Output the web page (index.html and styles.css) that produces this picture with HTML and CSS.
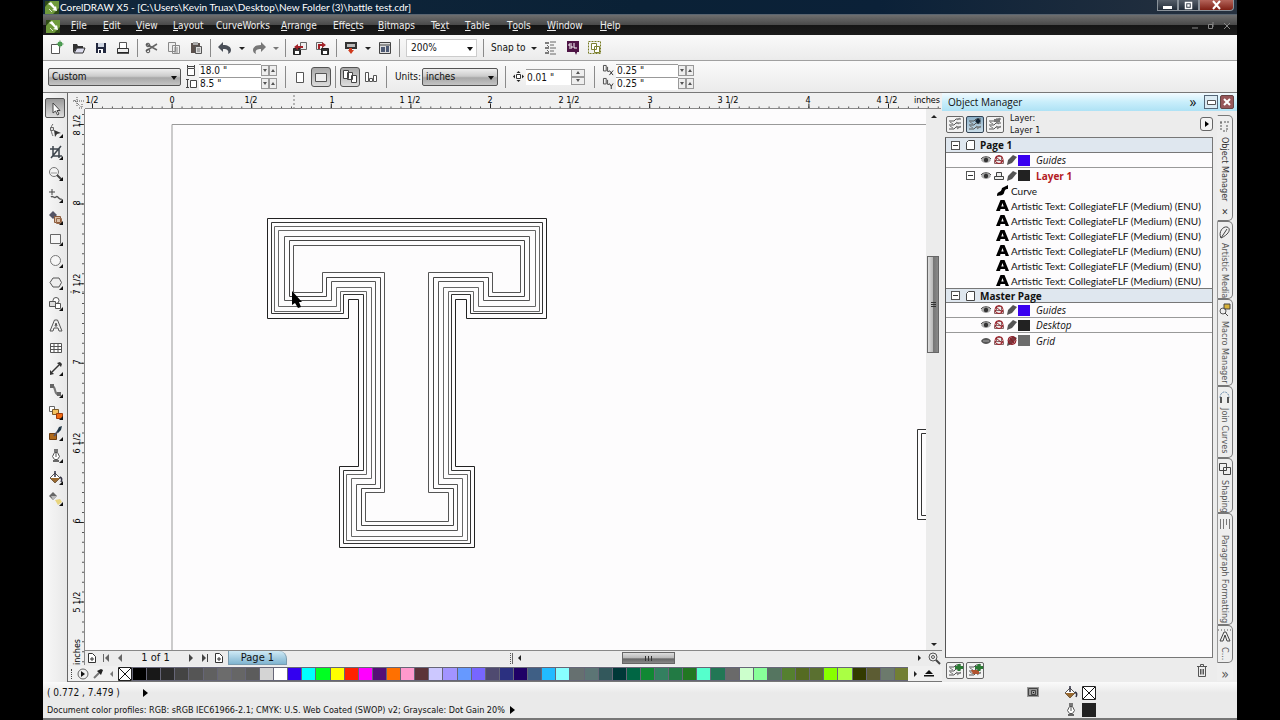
FILE: index.html
```html
<!DOCTYPE html>
<html lang="en">
<head>
<meta charset="utf-8">
<title>CorelDRAW X5</title>
<link rel="stylesheet" href="styles.css">
</head>
<body>
<svg class="defs" aria-hidden="true">
  <defs>
    <g id="i-logo"><rect width="14" height="13" fill="#6f9a3c"/><path d="M0 0h5L0 6zM14 13H8l6-6z" fill="#2f4a16"/><path d="M3 3l3-2 4 5 1-1 1 5-5-1 2-1-4-4z" fill="#fff"/><path d="M4 8l3 3" stroke="#dfe8d0"/></g>
    <g id="i-new"><path d="M2.500 4.500h8v9h-8z" fill="#fff" stroke="#555"/><circle cx="11" cy="4" r="2.500" fill="#3c9a46"/><path d="M11 0v8M7 4h8" stroke="#6a9a66" stroke-width=".6"/></g>
    <g id="i-open"><path d="M2 13V4h4l1 2h5v2H6z" fill="#333"/><path d="M3 13l3-5h8l-2 5z" fill="#dde" stroke="#333"/></g>
    <g id="i-save"><path d="M3 3h10v10H3z" fill="#23293f"/><path d="M5 3h6v4H5z" fill="#cfd6e2"/><path d="M5 9h5v4H5z" fill="#fff"/><path d="M6 10h2v3H6z" fill="#23293f"/></g>
    <g id="i-print"><path d="M4.500 8V2.500h7V8" fill="#fff" stroke="#555"/><path d="M2.500 8.500h11v4h-11z" fill="#eee" stroke="#333"/><path d="M2 13h12" stroke="#222" stroke-width="1.500"/></g>
    <g id="i-cut"><path d="M2 4l11 6M2 11l11-7" stroke="#666" stroke-width="1.500"/><circle cx="4" cy="5" r="1.800" fill="none" stroke="#555"/><circle cx="4" cy="11" r="1.800" fill="none" stroke="#555"/></g>
    <g id="i-copy"><path d="M2.500 2.500h7v9h-7zM6.500 5.500h7v8h-7z" fill="#eee" stroke="#888"/><path d="M8 8h4M8 10h4M8 12h4" stroke="#888"/></g>
    <g id="i-paste"><path d="M3 3h9v10H3z" fill="#5a504c"/><path d="M5 2h5v3H5z" fill="#aaa"/><path d="M7.500 6.500h6v7h-6z" fill="#ddd" stroke="#555"/><path d="M9 9h3M9 11h3" stroke="#777"/></g>
    <g id="i-undo"><path d="M1 7l5-5v3c5 0 8 2 8 5 0 2-1 3-3 4 1-3 0-5-5-5v3z" fill="#4a4f58"/></g>
    <g id="i-redo"><path d="M15 7l-5-5v3C5 5 2 7 2 10c0 2 1 3 3 4-1-3 0-5 5-5v3z" fill="#777"/></g>
    <g id="i-import"><path d="M1.500 8.500h7v6h-7z" fill="#333" stroke="#222"/><path d="M3 11h4v3H3z" fill="#fff"/><path d="M8.500 2.500h6v7h-6z" fill="#eee" stroke="#666"/><path d="M11 3v3H6V4L2 7l4 3V8h5z" fill="#a32228"/></g>
    <g id="i-export"><path d="M2.500 2.500h6v7h-6z" fill="#eee" stroke="#666"/><path d="M7.500 8.500h7v6h-7z" fill="#333" stroke="#222"/><path d="M9 11h4v3H9z" fill="#fff"/><path d="M4 9V4h4V2l4 3-4 3V6H6v3z" fill="#a32228"/></g>
    <g id="i-launch"><path d="M2 2h12v7H2z" fill="#333"/><path d="M4 4h8v3H4z" fill="#bbb"/><path d="M6 8h3v2h2l-3 4-3-4h1z" fill="#d03a1c"/></g>
    <g id="i-welcome"><path d="M2.500 2.500h11v11h-11z" fill="#ddd" stroke="#444"/><path d="M3 5h10" stroke="#444"/><path d="M4 7h4v5H4zM9 6h3v6H9z" fill="#4d5973"/></g>
    <g id="i-opts"><path d="M2 3h4M2 8h4M2 13h4" stroke="#555" stroke-width="1.500"/><path d="M7 2h6M7 5h4M7 8h6M7 11h4M7 14h6M4 5l2 2M4 10l2 2" stroke="#666"/></g>
    <g id="i-sl"><path d="M2 1h12v11H2z" fill="#4e1545"/><path d="M7 4H4v2h3v2H4M9 3v5h3" stroke="#fff" fill="none"/><path d="M9 10h4l-2 5z" fill="#4e1545"/></g>
    <g id="i-group"><path d="M1.500 1.500h12v12h-12z" fill="none" stroke="#777b22" stroke-dasharray="2 1"/><path d="M4.500 3.500h5v6h-5zM7.500 6.500h5v6h-5z" fill="#fff" stroke="#7b8030"/></g>
    <g id="i-pick"><path d="M5 2v10l2.500-2 2 4 1.500-1-2-3.500H12z" fill="#fff" stroke="#444"/></g>
    <g id="i-shape"><path d="M5 1c-3 3-2 8 0 12" stroke="#666" fill="none"/><path d="M2.500 4.500h3v3h-3z" fill="#ddd" stroke="#666"/><path d="M6 7l7 3-4 1-2 3z" fill="#333"/></g>
    <g id="i-crop"><path d="M5 1v10h9M2 4h9v9M13 1L3 13" stroke="#3c444c" stroke-width="1.500" fill="none"/></g>
    <g id="i-zoom"><circle cx="6" cy="6" r="4.500" fill="#f4f4f4" stroke="#777"/><path d="M3 7h6" stroke="#999"/><path d="M9 9l5 5" stroke="#444" stroke-width="2"/></g>
    <g id="i-free"><path d="M4 1v6M1 4h6" stroke="#444"/><path d="M3 9c2-2 3 2 5 0s3 4 6 2" stroke="#555" stroke-width="1.500" fill="none"/></g>
    <g id="i-smart"><path d="M5 1l4 4-4 4-4-4z" fill="#556"/><path d="M6.500 6.500h6v6h-6z" fill="#d9c0aa" stroke="#8b5a3a"/><path d="M8.500 8.500h5v5h-5z" fill="none" stroke="#9a6a4a"/></g>
    <g id="i-rect"><path d="M2.500 3.500h10v9h-10z" fill="#f6f6f6" stroke="#666"/></g>
    <g id="i-ell"><circle cx="7.500" cy="7.500" r="5" fill="#f6f6f6" stroke="#777"/></g>
    <g id="i-poly"><path d="M5 3h6l2.500 4.500L11 12H5L2 7.500z" fill="#eee" stroke="#555"/></g>
    <g id="i-basic"><circle cx="8" cy="4.500" r="3" fill="#fff" stroke="#555"/><path d="M1.500 5.500h6v5h-6z" fill="#ddd" stroke="#555"/><path d="M7.500 7.500h5v5h-5z" fill="#fff" stroke="#555"/></g>
    <g id="i-text"><path d="M2 13L6.500 2h3L14 13h-3l-1-3H6l-1 3zM7 8h2L8 5z" fill="#eee" stroke="#555"/></g>
    <g id="i-table"><path d="M2.500 3.500h11v9h-11zM2.500 6.500h11M2.500 9.500h11M6 3.500v9M10 3.500v9" fill="#fff" stroke="#555"/></g>
    <g id="i-dim"><path d="M4 11l7-7" stroke="#333" stroke-width="1.500"/><path d="M2 9l4 4-4 1zM9 2l4 4 1-3-2-2z" fill="#333"/></g>
    <g id="i-conn"><path d="M4 3c5 1 1 8 7 9" stroke="#777" fill="none" stroke-width="2"/><path d="M2 1h4v4H2zM9 9h4v4H9z" fill="#666"/></g>
    <g id="i-blend"><path d="M1.500 1.500h5v5h-5z" fill="#fff" stroke="#666"/><path d="M4.500 4.500h6v5h-6z" fill="#f3c25f" stroke="#7b5a28"/><path d="M8.500 8.500h6v5h-6z" fill="#f06a12" stroke="#a03a08"/></g>
    <g id="i-drop"><path d="M1.500 7.500h7v6h-7z" fill="#b06a1c" stroke="#6d3c0e"/><path d="M6 10l4-5" stroke="#556" stroke-width="2"/><path d="M9 5l2-4 3-1-1 4-3 3z" fill="#223848"/></g>
    <g id="i-pen"><path d="M6 1h4v3H6z" fill="#777"/><path d="M6.500 4.500h3l2 4-2 3h-3l-2-3zM8 5v4" fill="#fff" stroke="#555"/><path d="M5 12h6v2H5z" fill="#666"/></g>
    <g id="i-fill"><path d="M2 8l5-5 5 5-5 5z" fill="#fff" stroke="#555"/><path d="M2 8h10l-5 5z" fill="#9a6a30"/><path d="M7 1v6M12 7c2 1 2 3 1 5" stroke="#334" fill="none" stroke-width="1.500"/></g>
    <g id="i-ifill"><path d="M5 1l4 4-4 4-4-4z" fill="#666"/><path d="M3 5h6L5 9z" fill="#bbb"/><path d="M7 9l5-1 2 3-4 3z" fill="#e8d47e"/></g>
    <g id="i-eye"><path d="M0 5c2-4 8-4 10 0-2 4-8 4-10 0z" fill="#aaa"/><path d="M0 4c2-3 8-3 10 0" fill="none" stroke="#444"/><circle cx="5" cy="5" r="2.200" fill="#333"/></g>
    <g id="i-eyeoff"><path d="M0 5c2-4 8-4 10 0-2 4-8 4-10 0z" fill="#555"/><path d="M2 5h6" stroke="#aaa"/></g>
    <g id="i-prn"><path d="M2.500 5V1.500h5V5M.5 5.500h9v3h-9z" fill="#eee" stroke="#444"/></g>
    <g id="i-noprn"><path d="M2.500 5V1.500h5V5M.5 5.500h9v3h-9z" fill="#eee" stroke="#866"/><circle cx="5" cy="4.500" r="4" fill="none" stroke="#a11a24"/><path d="M2 2l6 5" stroke="#a11a24"/></g>
    <g id="i-pencil"><path d="M0 10l1-5 5-5 4 2-5 6z" fill="#555"/></g>
    <g id="i-nopencil"><path d="M0 10l1-5 5-5 4 2-5 6z" fill="#555"/><circle cx="5" cy="4.500" r="4" fill="#a11a24" fill-opacity=".5" stroke="#8b1520"/><path d="M3 2l4 5" stroke="#8b1520"/></g>
    <g id="i-page"><path d="M2.500.5h6v9h-8v-7z" fill="#fff" stroke="#444"/></g>
    <g id="i-A"><path d="M0 11L4.500 0h4L13 11H9.500L9 9H4.500L4 11zM5.300 6.500h2.400L6.500 3z" fill="#000" fill-rule="evenodd"/></g>
    <g id="i-layers"><path d="M1 4h5l2-2h5M1 8h5l2-2h5M1 12h5l2-2h5" stroke="#555" fill="none"/><path d="M2 5l3 2M8 5l3 2M2 9l3 2M8 9l3 2M9 3l3-2M9 12l4-3" stroke="#777"/></g>
    <g id="i-width"><path d="M1 1.500h8M1.500 0v3M8.500 0v3" stroke="#444" fill="none"/><path d="M1.500 3.500h7v7h-7z" fill="#fff" stroke="#444"/></g>
    <g id="i-height"><path d="M1.500 1v9M0 1.500h3M0 9.500h3" stroke="#444"/><path d="M4.500 2.500h6v7h-6z" fill="#fff" stroke="#444"/></g>
    <g id="i-pgadd"><path d="M1.500 1.500h4l3 3v6h-7zM3 7h4M5 5v4" fill="#fff" stroke="#333"/></g>
    <g id="i-x"><path d="M.5.5h13v13H.5z" fill="#fff" stroke="#222"/><path d="M1 1l12 12M13 1L1 13" stroke="#111"/></g>
  </defs>
</svg>
<div class="app">
  <header class="titlebar">
    <svg class="logo"><use href="#i-logo"/></svg>
    <h1>CorelDRAW X5 - [C:\Users\Kevin Truax\Desktop\New Folder (3)\hattle test.cdr]</h1>
    <div class="winbtns">
      <button aria-label="Minimize"><svg width="10" height="8"><path d="M0 5h9v3H0z" fill="#fff"/></svg></button>
      <button aria-label="Restore"><svg width="10" height="9"><path d="M1.500 1.500h6v6h-6zM4 4h1v1H4z" fill="none" stroke="#fff" stroke-width="1.500"/></svg></button>
      <button class="close" aria-label="Close"><svg width="10" height="8"><path d="M1 0l7 8M8 0L1 8" stroke="#fff" stroke-width="2"/></svg></button>
    </div>
  </header>
  <nav class="menubar">
    <svg class="logo"><use href="#i-logo"/></svg>
    <button style="--w:32px"><u>F</u>ile</button><button style="--w:33px"><u>E</u>dit</button><button style="--w:37px"><u>V</u>iew</button><button style="--w:43px"><u>L</u>ayout</button><button style="--w:65px">CurveWorks</button><button style="--w:52px"><u>A</u>rrange</button><button style="--w:45px">Effe<u>c</u>ts</button><button style="--w:53px"><u>B</u>itmaps</button><button style="--w:34px">Te<u>x</u>t</button><button style="--w:42px"><u>T</u>able</button><button style="--w:40px">T<u>o</u>ols</button><button style="--w:53px"><u>W</u>indow</button><button style="--w:30px"><u>H</u>elp</button>
    <div class="docbtns">
      <button aria-label="Minimize document"><svg width="8" height="8"><path d="M1 6h6" stroke="#888"/></svg></button>
      <button aria-label="Restore document"><svg width="8" height="8"><path d="M1.500 2.500h4v4h-4zM6 0v5" fill="none" stroke="#888"/></svg></button>
      <button aria-label="Close document"><svg width="8" height="8"><path d="M1 1l6 6M7 1L1 7" stroke="#888"/></svg></button>
    </div>
  </nav>

  <div class="toolbar">
    <button class="ib" aria-label="New"><svg><use href="#i-new"/></svg></button>
    <button class="ib" aria-label="Open"><svg><use href="#i-open"/></svg></button>
    <button class="ib" aria-label="Save"><svg><use href="#i-save"/></svg></button>
    <button class="ib" aria-label="Print"><svg><use href="#i-print"/></svg></button>
    <i class="sep"></i>
    <button class="ib" aria-label="Cut"><svg><use href="#i-cut"/></svg></button>
    <button class="ib" aria-label="Copy"><svg><use href="#i-copy"/></svg></button>
    <button class="ib" aria-label="Paste"><svg><use href="#i-paste"/></svg></button>
    <i class="sep"></i>
    <button class="ib" aria-label="Undo"><svg><use href="#i-undo"/></svg></button>
    <button class="dd" aria-label="Undo list"></button>
    <button class="ib" aria-label="Redo"><svg><use href="#i-redo"/></svg></button>
    <button class="dd dim" aria-label="Redo list"></button>
    <i class="sep"></i>
    <button class="ib" aria-label="Import"><svg><use href="#i-import"/></svg></button>
    <button class="ib" aria-label="Export"><svg><use href="#i-export"/></svg></button>
    <i class="sep"></i>
    <button class="ib" aria-label="Application launcher"><svg><use href="#i-launch"/></svg></button>
    <button class="dd" aria-label="Launcher list"></button>
    <button class="ib" aria-label="Welcome screen"><svg><use href="#i-welcome"/></svg></button>
    <i class="sep"></i>
    <span class="combo zoomsel"><select aria-label="Zoom level"><option>200%</option></select></span>
    <i class="sep"></i>
    <button class="snap">Snap to</button>
    <button class="dd" aria-label="Snap list"></button>
    <button class="ib" aria-label="Options"><svg><use href="#i-opts"/></svg></button>
    <button class="ib" aria-label="SL"><svg><use href="#i-sl"/></svg></button>
    <button class="ib" aria-label="Group"><svg><use href="#i-group"/></svg></button>
  </div>

  <div class="propbar">
    <span class="combo grad papersel"><select aria-label="Paper type"><option>Custom</option></select></span>
    <div class="pair">
      <label class="num"><svg><use href="#i-width"/></svg><input value='18.0 "' aria-label="Page width"><b></b><b class="up"></b></label>
      <label class="num"><svg><use href="#i-height"/></svg><input value='8.5 "' aria-label="Page height"><b></b><b class="up"></b></label>
    </div>
    <i class="sep"></i>
    <button class="ib" aria-label="Portrait"><svg><path d="M4.500 3.500h7v10h-7z" fill="#fff" stroke="#555"/></svg></button>
    <button class="ib on" aria-label="Landscape"><svg><path d="M2.500 4.500h11v8h-11z" fill="#eee" stroke="#555"/></svg></button>
    <i class="sep"></i>
    <button class="ib on" aria-label="All pages"><svg><path d="M1.500 1.500h5v8h-5zM5.500 3.500h5v7h-5zM9.500 6.500h5v7h-5z" fill="#fff" stroke="#444"/></svg></button>
    <button class="ib" aria-label="Current page"><svg><path d="M2.500 3.500h3v9h-3zM6.500 9.500h3v3h-3zM10.500 6.500h3v6h-3z" fill="#fff" stroke="#555"/></svg></button>
    <i class="sep"></i>
    <label class="units" for="units">Units:</label>
    <span class="combo grad unitsel"><select id="units"><option>inches</option></select></span>
    <i class="sep"></i>
    <label class="num nudge"><svg viewBox="0 0 11 11"><path d="M3.500 3.500h4v4h-4z" fill="#fff" stroke="#333"/><path d="M5.500 0l2 2h-4zM5.500 11l2-2h-4zM0 5.500l2-2v4zM11 5.500l-2-2v4z" fill="#222"/></svg><input value='0.01 "' aria-label="Nudge distance"><span class="spin"><b class="up"></b><b></b></span></label>
    <i class="sep"></i>
    <div class="pair dup">
      <label class="num"><svg viewBox="0 0 12 12"><path d="M.5.5h3v6h-3zM5 2v5h2" fill="none" stroke="#444"/><path d="M7 6l4 5M11 6l-4 5" stroke="#222"/></svg><input value='0.25 "' aria-label="Duplicate distance X"><b></b><b class="up"></b></label>
      <label class="num"><svg viewBox="0 0 12 12"><path d="M.5.5h3v6h-3zM5 2v5h2" fill="none" stroke="#444"/><path d="M7 6l2 3 2-3M9 9v3" fill="none" stroke="#222"/></svg><input value='0.25 "' aria-label="Duplicate distance Y"><b></b><b class="up"></b></label>
    </div>
  </div>

  <main class="work">
    <aside class="toolbox">
      <button class="on" aria-label="Pick"><svg><use href="#i-pick"/></svg></button>
      <button class="fly" aria-label="Shape"><svg><use href="#i-shape"/></svg></button>
      <button class="fly" aria-label="Crop"><svg><use href="#i-crop"/></svg></button>
      <button class="fly" aria-label="Zoom"><svg><use href="#i-zoom"/></svg></button>
      <button class="fly" aria-label="Freehand"><svg><use href="#i-free"/></svg></button>
      <button class="fly" aria-label="Smart fill"><svg><use href="#i-smart"/></svg></button>
      <button class="fly" aria-label="Rectangle"><svg><use href="#i-rect"/></svg></button>
      <button class="fly" aria-label="Ellipse"><svg><use href="#i-ell"/></svg></button>
      <button class="fly" aria-label="Polygon"><svg><use href="#i-poly"/></svg></button>
      <button class="fly" aria-label="Basic shapes"><svg><use href="#i-basic"/></svg></button>
      <button aria-label="Text"><svg><use href="#i-text"/></svg></button>
      <button aria-label="Table"><svg><use href="#i-table"/></svg></button>
      <button class="fly" aria-label="Dimension"><svg><use href="#i-dim"/></svg></button>
      <button class="fly" aria-label="Connector"><svg><use href="#i-conn"/></svg></button>
      <button class="fly" aria-label="Blend"><svg><use href="#i-blend"/></svg></button>
      <button class="fly" aria-label="Eyedropper"><svg><use href="#i-drop"/></svg></button>
      <button class="fly" aria-label="Outline"><svg><use href="#i-pen"/></svg></button>
      <button class="fly" aria-label="Fill"><svg><use href="#i-fill"/></svg></button>
      <button class="fly" aria-label="Interactive fill"><svg><use href="#i-ifill"/></svg></button>
    </aside>

    <section class="center">
      <svg class="hruler">
        <path d="M6 7l7 7M9 4v10M5 8h11M14 11v4h-4" stroke="#555" stroke-dasharray="1 1" fill="none"/>
        <path d="M24 14.500H873" stroke="#555" stroke-width="2" stroke-dasharray="1 8.950"/>
        <path d="M24 13H873" stroke="#222" stroke-width="5" stroke-dasharray="1 78.600"/>
        <path d="M226 2v14" stroke="#777" stroke-dasharray="2 2"/>
        <path d="M17 15.500H873" stroke="#888"/>
        <g text-anchor="middle"><text x="24" y="10">1/2</text><text x="104" y="10">0</text><text x="183" y="10">1/2</text><text x="264" y="10">1</text><text x="342" y="10">1 1/2</text><text x="422" y="10">2</text><text x="501" y="10">2 1/2</text><text x="582" y="10">3</text><text x="660" y="10">3 1/2</text><text x="740" y="10">4</text><text x="819" y="10">4 1/2</text><text x="859" y="10">inches</text></g>
      </svg>
      <div class="mid">
        <svg class="vruler">
          <path d="M15 5V557" stroke="#555" stroke-width="2" stroke-dasharray="1 8.950"/>
          <path d="M13 15V557" stroke="#222" stroke-width="5" stroke-dasharray="1 78.600"/>
          <path d="M2 183H16" stroke="#777" stroke-dasharray="2 2"/>
          <path d="M16.500 0V557" stroke="#888"/>
          <g text-anchor="middle"><text transform="translate(12 16) rotate(-90)">8 1/2</text><text transform="translate(12 94) rotate(-90)">8</text><text transform="translate(12 175) rotate(-90)">7 1/2</text><text transform="translate(12 253) rotate(-90)">7</text><text transform="translate(12 334) rotate(-90)">6 1/2</text><text transform="translate(12 412) rotate(-90)">6</text><text transform="translate(12 493) rotate(-90)">5 1/2</text><text transform="translate(12 543) rotate(-90)">inches</text></g>
        </svg>
        <div class="view">
          <div class="viewrow">
            <svg class="canvas">
              <g transform="translate(-85 -109)" fill="none">
                <path d="M172 651V124.500H1000" stroke="#999"/>
                <path d="M932 429.500H917.500V519.500H932M932 433.500H921.500V515.500H932" stroke="#333"/>
                <path stroke="#222" d="M267.500 218.500H546.500V318.500H466.500V299.500H455.500V466.500H474.500V547.500H339.500V466.500H358.500V299.500H348.500V318.500H267.500Z"/>
                <path stroke="#333" d="M271.500 222.500H542.500V313.500H470.500V294.500H451.500V470.500H470.500V543.500H343.500V470.500H363.500V294.500H343.500V313.500H271.500Z"/>
                <path stroke="#666" d="M274.500 226.500H539.500V311.500H473.500V291.500H448.500V474.500H467.500V540.500H346.500V474.500H366.500V291.500H340.500V311.500H274.500Z"/>
                <path stroke="#666" d="M278.500 230.500H535.500V306.500H478.500V287.500H443.500V478.500H462.500V536.500H351.500V478.500H371.500V287.500H336.500V306.500H278.500Z"/>
                <path stroke="#555" d="M284.500 236.500H529.500V300.500H483.500V281.500H438.500V484.500H457.500V530.500H356.500V484.500H375.500V281.500H331.500V300.500H284.500Z"/>
                <path stroke="#444" d="M289.500 240.500H524.500V296.500H488.500V277.500H433.500V488.500H453.500V525.500H361.500V488.500H380.500V277.500H326.500V296.500H289.500Z"/>
                <path stroke="#555" d="M293.500 245.500H520.500V292.500H492.500V272.500H428.500V492.500H448.500V521.500H365.500V492.500H384.500V272.500H322.500V292.500H293.500Z"/>
                <path d="M292 291v14l3-2 3 5 3-1-2-5h3z" fill="#000"/>
              </g>
            </svg>
            <div class="vscroll"><button class="tri tu" aria-label="Scroll up"></button><div class="vtrack"><div class="vthumb"></div></div><button class="tri td" aria-label="Scroll down"></button></div>
          </div>
          <div class="navrow">
            <div class="pages">
              <button aria-label="Add page before"><svg width="11" height="12"><use href="#i-pgadd"/></svg></button>
              <button aria-label="First page"><svg width="8" height="8"><path d="M1.500 0v8" stroke="#666"/><path d="M7 0v8L3 4z" fill="#666"/></svg></button>
              <button aria-label="Previous page"><svg width="8" height="8"><path d="M6 0v8L2 4z" fill="#666"/></svg></button>
              <span class="count">1 of 1</span>
              <button aria-label="Next page"><svg width="8" height="8"><path d="M2 0v8l4-4z" fill="#444"/></svg></button>
              <button aria-label="Last page"><svg width="8" height="8"><path d="M6.500 0v8" stroke="#444"/><path d="M1 0v8l4-4z" fill="#444"/></svg></button>
              <button aria-label="Add page after"><svg width="11" height="12"><use href="#i-pgadd"/></svg></button>
            </div>
            <button class="pagetab">Page 1</button>
            <span class="grip"></span>
            <div class="hscroll"><button class="tri tl" aria-label="Scroll left"></button><div class="htrack"><div class="hthumb"></div></div><button class="tri tr" aria-label="Scroll right"></button></div>
            <button class="navzoom" aria-label="Navigator"><svg width="12" height="12"><circle cx="5" cy="5" r="4" fill="#eee" stroke="#555"/><circle cx="5" cy="5" r="1.500" fill="none" stroke="#555"/><path d="M8 8l4 4" stroke="#444" stroke-width="2"/></svg></button>
          </div>
        </div>
      </div>
      <div class="palette">
        <span class="pgrip"></span>
        <button class="pb" aria-label="Palette menu"><svg width="12" height="12"><circle cx="6" cy="6" r="5" fill="#eee" stroke="#666"/><path d="M4 3v6l4-3z" fill="#111"/></svg></button>
        <button class="pb" aria-label="Eyedropper"><svg width="12" height="12"><path d="M2 10l5-5" stroke="#777" stroke-width="2"/><path d="M5 3l4 4 2-5-2-1z" fill="#222"/></svg></button>
        <button class="pb tri tl dimt" aria-label="Palette left"></button>
        <button class="none" aria-label="No color"><svg width="14" height="14"><use href="#i-x"/></svg></button>
        <div class="swatches" id="swatches"></div>
        <button class="pb tri tr" aria-label="Palette right"></button>
        <button class="pb" aria-label="Expand palette"><svg width="10" height="8"><path d="M0 6h10v1.500H0zM1 5h8L5 1z" fill="#111"/></svg></button>
      </div>
    </section>

    <aside class="docker">
      <div class="dhead"><h2>Object Manager</h2><button class="chev" aria-label="Collapse">»</button><button class="db" aria-label="Roll up"><svg width="9" height="5"><path d="M.5.5h8v4h-8z" fill="#fff" stroke="#555"/></svg></button><button class="db red" aria-label="Close docker"><svg width="8" height="8"><path d="M1 1l6 6M7 1L1 7" stroke="#fff" stroke-width="2"/></svg></button></div>
      <div class="dbody">
        <div class="dmain">
          <div class="dtools">
            <button class="lb" aria-label="Object properties"><svg><use href="#i-layers"/></svg></button>
            <button class="lb sel" aria-label="Edit across layers"><svg><use href="#i-layers"/><path d="M10 1l3 3-3 3-3-3z" fill="#123"/></svg></button>
            <button class="lb" aria-label="Layer view"><svg><use href="#i-layers"/><path d="M6 2h6v3H6z" fill="#777"/></svg></button>
            <p>Layer:<br>Layer 1</p>
            <button class="lmenu" aria-label="Options"><svg width="8" height="8"><path d="M2 1v6l4-3z" fill="#000"/></svg></button>
          </div>
          <ul class="tree">
            <li class="page"><span class="exp"></span><svg class="pg"><use href="#i-page"/></svg>Page 1</li>
            <li class="layer line"><svg><use href="#i-eye"/></svg><svg><use href="#i-noprn"/></svg><svg><use href="#i-pencil"/></svg><i class="blue"></i><em>Guides</em></li>
            <li class="layer"><span class="exp"></span><svg><use href="#i-eye"/></svg><svg><use href="#i-prn"/></svg><svg><use href="#i-pencil"/></svg><i class="ink"></i><strong>Layer 1</strong></li>
            <li class="obj"><svg><path d="M1 11c0-6 4-2 5-8l6-3v4c-3 0-3 1-4 4s-4 2-7 3z" fill="#000"/></svg>Curve</li>
            <li class="obj"><svg><use href="#i-A"/></svg>Artistic Text: CollegiateFLF (Medium) (ENU)</li>
            <li class="obj"><svg><use href="#i-A"/></svg>Artistic Text: CollegiateFLF (Medium) (ENU)</li>
            <li class="obj"><svg><use href="#i-A"/></svg>Artistic Text: CollegiateFLF (Medium) (ENU)</li>
            <li class="obj"><svg><use href="#i-A"/></svg>Artistic Text: CollegiateFLF (Medium) (ENU)</li>
            <li class="obj"><svg><use href="#i-A"/></svg>Artistic Text: CollegiateFLF (Medium) (ENU)</li>
            <li class="obj"><svg><use href="#i-A"/></svg>Artistic Text: CollegiateFLF (Medium) (ENU)</li>
            <li class="page"><span class="exp"></span><svg class="pg"><use href="#i-page"/></svg>Master Page</li>
            <li class="layer line"><svg><use href="#i-eye"/></svg><svg><use href="#i-noprn"/></svg><svg><use href="#i-pencil"/></svg><i class="blue"></i><em>Guides</em></li>
            <li class="layer line"><svg><use href="#i-eye"/></svg><svg><use href="#i-noprn"/></svg><svg><use href="#i-pencil"/></svg><i class="ink"></i><em>Desktop</em></li>
            <li class="layer"><svg><use href="#i-eyeoff"/></svg><svg><use href="#i-noprn"/></svg><svg><use href="#i-nopencil"/></svg><i class="gray"></i><em>Grid</em></li>
          </ul>
          <div class="dfoot">
            <button class="lb" aria-label="New layer"><svg><use href="#i-layers"/><path d="M11 1v7M7 4.500h8" stroke="#2c7a35" stroke-width="3"/></svg></button>
            <button class="lb" aria-label="New master layer"><svg><use href="#i-layers"/><path d="M3 7h8v4H5z" fill="#b0532f"/><path d="M11 1v7M7 4.500h8" stroke="#2c7a35" stroke-width="3"/></svg></button>
            <button class="trash" aria-label="Delete"><svg width="10" height="13"><path d="M0 2.500h10M3.500 2V.5h3V2M1.500 3v9.500h7V3M3.500 5v5.500M5 5v5.500M6.500 5v5.500" fill="none" stroke="#555"/></svg></button>
          </div>
        </div>
        <div class="tabs">
          <button class="active" style="--h:106px"><svg><path d="M2 3h2M6 3h6M3 3v9M9 6v6M5 12h4" stroke="#555" stroke-dasharray="2 1" fill="none"/></svg>Object Manager<span>✕</span></button>
          <button style="--h:78px"><svg><path d="M3 13C0 7 5 1 9 2s3 7-6 11l6-9" fill="#eee" stroke="#444"/></svg>Artistic Media</button>
          <button style="--h:87px"><svg><path d="M6 1h6v5H6z" fill="#d8b23a" stroke="#444"/><circle cx="5" cy="8" r="3" fill="none" stroke="#555"/><path d="M7 10l3 3" stroke="#444"/></svg>Macro Manager</button>
          <button style="--h:72px"><svg><path d="M2 8c0-8 9-8 9 0" fill="none" stroke="#68a" stroke-dasharray="2 1"/><path d="M2 7h2v6H2zM9 7h2v6H9z" fill="#555"/></svg>Join Curves</button>
          <button style="--h:55px"><svg><path d="M1.500 1.500h7v7h-7zM5.500 5.500h7v7h-7z" fill="none" stroke="#444"/></svg>Shaping</button>
          <button style="--h:112px"><svg><path d="M2.500 2v10M5.500 2v10M8.500 2v6M11.500 2v10" stroke="#777"/></svg>Paragraph Formatting</button>
          <button style="--h:38px"><svg><path d="M2 12l4-9h2l4 9h-3L7 6l-2 6z" fill="#eee" stroke="#444"/><path d="M0 1h13" stroke="#555" stroke-dasharray="1 2"/></svg>C...</button>
          <button class="more" aria-label="More dockers">»</button>
        </div>
      </div>
    </aside>
  </main>

  <footer class="status">
    <div class="st1"><span class="coord">( 0.772 , 7.479 )</span><i class="play"></i>
      <svg class="proof"><path d="M0 0h12v10H0z" fill="#999"/><path d="M1.500 1.500h9v7h-9zM4.500 3.500h4v4h-4z" fill="none" stroke="#444"/><path d="M6 5h1v1H6z" fill="#111"/></svg>
      <svg class="ic"><use href="#i-fill"/></svg><svg class="chip"><use href="#i-x"/></svg></div>
    <div class="st2"><span>Document color profiles: RGB: sRGB IEC61966-2.1; CMYK: U.S. Web Coated (SWOP) v2; Grayscale: Dot Gain 20%</span><i class="play"></i>
      <svg class="ic"><use href="#i-pen"/></svg><i class="chip ink"></i></div>
  </footer>
</div>
<script src="palette.js"></script>
</body>
</html>
```
FILE: styles.css
```css
* { box-sizing: border-box; }
body { margin: 0; background: #000; color: #111; font: 10px/12px "DejaVu Sans Condensed", "DejaVu Sans", sans-serif; }
button, input, select { font: inherit; color: inherit; margin: 0; padding: 0; border: 0; background: none; border-radius: 0; }
button { display: flex; align-items: center; justify-content: center; flex: none; }
h1, h2, p, ul { margin: 0; padding: 0; font: inherit; }
ul { list-style: none; }
svg { display: block; flex: none; width: 16px; height: 16px; overflow: visible; }
svg[width="8"] { width: 8px; height: 8px; }
svg[width="9"] { width: 9px; height: 5px; }
svg[width="10"] { width: 10px; height: 9px; }
svg[width="11"] { width: 11px; height: 12px; }
svg[width="12"] { width: 12px; height: 12px; }
svg[width="14"] { width: 14px; height: 14px; }
.defs { position: absolute; width: 0; height: 0; }

.app { display: flex; flex-direction: column; height: 100vh; margin: 0 43px; background: #ececec; overflow: hidden; }

.titlebar { display: flex; align-items: center; height: 15px; padding-left: 2px; border-bottom: 1px solid #596470; background: linear-gradient(90deg, #12273b, #0a2136 50%, #0b2138 70%, #26313f); color: #fff; flex: none; }
.titlebar .logo, .menubar .logo { width: 14px; height: 13px; }
.titlebar h1 { margin-left: 1px; font: 10px/13px Lato, sans-serif; white-space: nowrap; }
.winbtns { display: flex; margin-left: auto; margin-right: 3px; align-self: flex-start; }
.winbtns button { width: 21px; height: 11px; border: 1px solid #8a929a; border-top: 0; background: linear-gradient(#555e69, #222c38); }
.winbtns button.close { width: 35px; background: linear-gradient(#b4645a, #7e1f14); border-radius: 0 0 4px 0; }
.winbtns svg { width: 10px; height: 8px; }

.menubar { display: flex; align-items: center; height: 20px; background: linear-gradient(#6e6e6e, #4a4a4a 48%, #141414 52%, #1c1c1c); color: #eee; flex: none; padding: 2px 0 0 3px; }
.menubar .logo { width: 11px; margin-right: 14px; }
.menubar > button { width: var(--w); justify-content: flex-start; white-space: nowrap; }
.docbtns { display: flex; gap: 8px; margin-left: auto; margin-right: 6px; }

.toolbar { display: flex; align-items: center; height: 26px; padding: 1px 0 0 3px; border-bottom: 1px solid #a0a0a0; background: linear-gradient(#fafafa, #ebebeb); flex: none; }
.ib { width: 22px; height: 22px; }
.ib.on { width: 20px; height: 20px; border: 1px solid #555; border-radius: 3px; background: linear-gradient(#a8a8a8, #ddd); }
.sep { width: 1px; height: 18px; margin: 0 3px; background: #8a8a8a; flex: none; }
.dd { width: 12px; height: 20px; }
.dd::after { content: ""; border: 3px solid transparent; border-top-color: #222; border-bottom: 0; }
.dd.dim::after { border-top-color: #777; }
.combo { position: relative; display: flex; flex: none; }
.combo select { appearance: none; width: 100%; height: 18px; padding: 0 4px; border: 1px solid #ccc; background: #fff; }
.combo::after { content: ""; position: absolute; right: 4px; top: 8px; border: 3px solid transparent; border-top: 4px solid #111; border-bottom: 0; pointer-events: none; }
.combo.grad select { padding: 0 3px; border: 1px solid #555; border-radius: 2px; background: linear-gradient(#eee, #ccc 45%, #a8a8a8 55%, #c4c4c4); }
.zoomsel { width: 71px; margin: 0 3px; }
.snap { margin: 0 3px 0 4px; white-space: nowrap; width: 34px; justify-content: flex-start; }

.propbar { display: flex; align-items: center; height: 32px; padding: 0 5px; border-bottom: 1px solid #777; background: linear-gradient(#fafafa, #ebebeb); flex: none; }
.papersel { width: 133px; margin-right: 5px; }
.pair { display: flex; flex-direction: column; margin-right: 5px; }
.num { display: flex; align-items: center; height: 13px; }
.num svg { width: 11px; height: 11px; margin-right: 2px; }
.num input { width: 62px; height: 13px; padding-left: 1px; background: #fff; border-top: 1px solid #999; }
.num b { display: flex; align-items: center; justify-content: center; width: 8px; height: 11px; border: 1px solid #999; background: #eee; }
.num b::after { content: ""; border: 2px solid transparent; border-top: 3px solid #555; border-bottom: 0; }
.num b.up::after { border-top: 0; border-bottom: 3px solid #555; }
.propbar .sep { height: 22px; }
.propbar .ib + .sep { margin: 0 4px; }
.units { margin: 0 3px 0 4px; width: 24px; white-space: nowrap; }
.unitsel { width: 76px; margin-right: 4px; }
.nudge { margin: 0 6px 0 4px; height: 16px; }
.nudge input { width: 45px; height: 16px; }
.nudge .spin { display: flex; flex-direction: column; }
.nudge b { width: 14px; height: 8px; }
.dup { margin-left: 5px; }

.work { display: flex; flex: 1; min-height: 0; }
.toolbox { display: flex; flex-direction: column; align-items: center; width: 25px; padding-top: 5px; border-right: 1px solid #666; flex: none; background: linear-gradient(90deg, #f8f8f8, #e8e8e8); }
.toolbox button { position: relative; width: 20px; height: 20px; margin-bottom: 2px; flex: 0 0 20px; }
.toolbox button:nth-child(3n) { margin-bottom: 1px; }
.toolbox .on { border: 1px solid #555; border-radius: 2px; background: linear-gradient(#999, #ddd); }
.toolbox .fly::after { content: ""; position: absolute; right: 2px; bottom: 2px; border-left: 4px solid transparent; border-bottom: 4px solid #111; }
.toolbox svg { width: 15px; height: 15px; }

.center { display: flex; flex-direction: column; flex: 1; min-width: 0; border-bottom: 1px solid #777; }
.hruler { width: 100%; height: 16px; font-size: 9px; background: #f0f0f0; overflow: hidden; }
.mid { display: flex; flex: 1; min-height: 0; }
.vruler { width: 17px; height: 100%; font-size: 9px; background: #f0f0f0; overflow: hidden; }
.view { display: flex; flex-direction: column; flex: 1; min-width: 0; }
.viewrow { display: flex; flex: 1; min-height: 0; }
.canvas { flex: 1; min-width: 0; height: 100%; background: #fdfcfd; overflow: hidden; }
.vscroll { display: flex; flex-direction: column; align-items: center; width: 16px; padding: 6px 0 4px; background: #ececec; }
.tri::after { content: ""; border: 3px solid transparent; }
.tu::after { border-top: 0; border-bottom: 3px solid #222; }
.td::after { border-bottom: 0; border-top: 3px solid #222; }
.tl::after { border-left: 0; border-right: 3px solid #222; }
.tr::after { border-right: 0; border-left: 3px solid #222; }
.dimt::after { border-right-color: #777; }
.vtrack { flex: 1; align-self: stretch; padding-top: 138px; }
.vthumb { height: 97px; margin: 0 3px 0 1px; border: 1px solid #666; background: repeating-linear-gradient(#333 0 1px, transparent 1px 2px) center/5px 5px no-repeat, linear-gradient(90deg, #ddd, #bbb 45%, #777 55%, #888); }
.navrow { display: flex; align-items: center; height: 15px; border-top: 1px solid #888; background: #ececec; flex: none; }
.pages { display: flex; align-items: center; }
.pages button { width: 14px; height: 14px; }
.count { width: 57px; text-align: center; font-size: 11px; }
.pagetab { width: 59px; height: 14px; margin-left: 2px; font-size: 11px; background: linear-gradient(#cfeaf6, #7fb4d0); border: 1px solid #7a9cb0; border-top: 0; border-radius: 0 8px 0 0; }
.grip { width: 3px; height: 11px; margin-left: 223px; border-left: 1px dotted #555; border-right: 1px solid #666; flex: none; }
.hscroll { display: flex; align-items: center; flex: 1; height: 14px; padding: 0 5px; }
.htrack { display: flex; flex: 1; padding-left: 25%; }
.hthumb { width: 53px; height: 12px; border: 1px solid #666; background: repeating-linear-gradient(90deg, #333 0 1px, transparent 1px 3px) center/7px 5px no-repeat, linear-gradient(#ddd, #bbb 45%, #666 60%, #888); }
.navzoom { width: 16px; height: 14px; }
.palette { display: flex; align-items: center; height: 15px; margin-top: 1px; padding-left: 3px; background: #f0f0f0; flex: none; }
.pgrip { width: 2px; height: 10px; margin-right: 2px; border-left: 1px dotted #444; }
.pb { width: 15px; height: 14px; }
.pb.dimt { width: 12px; }
.none { width: 15px; height: 15px; }
.swatches { display: flex; flex: 1; height: 14px; }
.swatches button { flex: 1 1 0; min-width: 0; height: 14px; border: solid #667; border-width: 1px 0 1px 1px; }
.swatches + .pb { width: 14px; }
.swatches + .pb + .pb { margin-right: 6px; width: 14px; }

.docker { display: flex; flex-direction: column; width: 295px; flex: none; font-family: "Open Sans", sans-serif; }
.dhead { display: flex; align-items: center; height: 18px; padding: 0 3px 0 6px; background: linear-gradient(#f2fbff, #c9eefb 50%, #aee2f5); flex: none; }
.dhead h2 { flex: 1; }
.chev { width: 18px; font-size: 14px; }
.db { width: 14px; height: 14px; margin-left: 2px; border: 1px solid #567; background: #dcecf4; }
.db.red { background: #97575a; border-color: #644; border-radius: 2px; }
.dbody { display: flex; flex: 1; min-height: 0; }
.dmain { display: flex; flex-direction: column; flex: 1; min-width: 0; margin-left: 3px; }
.dtools { display: flex; align-items: center; height: 26px; padding: 0 0 0 1px; gap: 2px; flex: none; }
.dtools p { margin-left: 4px; flex: 1; font: 9px/12px "DejaVu Sans Condensed", sans-serif; }
.lb { width: 18px; height: 17px; border: 1px solid #666; border-radius: 2px; background: #f2f2f2; }
.lb svg { width: 15px; height: 14px; }
.lb.sel { background: linear-gradient(#8cb0c8, #c8dce8); border-color: #345; }
.lmenu { width: 13px; height: 14px; border: 1px solid #666; border-radius: 3px; background: #f4f4f4; }
.tree { flex: 1; border: 1px solid #777; border-left-color: #555; background: #fdfcfd; overflow: hidden; }
.tree li { display: flex; align-items: center; height: 15px; white-space: nowrap; }
.tree .page { padding-left: 5px; font-weight: bold; background: #dfe7ef; border-bottom: 1px solid #777; }
.tree .page + li ~ .page { border-top: 1px solid #777; }
.exp { width: 9px; height: 9px; border: 1px solid #555; background: linear-gradient(#333, #333) center/5px 1px no-repeat #fff; flex: none; }
.tree .pg { width: 9px; height: 10px; margin: 0 5px 0 6px; }
.layer { padding-left: 35px; gap: 3px; }
.layer.line { border-bottom: 1px solid #999; }
.layer .exp { margin-left: -15px; margin-right: 3px; }
.layer svg { width: 10px; height: 10px; }
.layer i { width: 12px; height: 11px; margin-left: -2px; }
.layer em, .layer strong { margin-left: 3px; }
.layer strong { color: #b41a24; }
.blue { background: #3a00f0; }
.ink { background: #222; }
.gray { background: #6c6c6c; }
.obj { padding-left: 50px; font-family: Lato, sans-serif; }
.obj svg { width: 13px; height: 11px; margin-right: 2px; }
.dfoot { display: flex; align-items: center; gap: 2px; height: 24px; padding: 0 6px 0 1px; flex: none; }
.trash { margin-left: auto; width: 10px; }
.trash svg { height: 13px; }
.tabs { display: flex; flex-direction: column; width: 24px; padding: 4px 4px 0 4px; flex: none; }
.tabs button { writing-mode: vertical-rl; width: 16px; height: var(--h); justify-content: flex-start; gap: 4px; padding-top: 3px; border: 1px solid #777; border-left-color: #999; border-radius: 0 5px 5px 0; background: #eee; color: #555; font: 9px/14px "DejaVu Sans Condensed", sans-serif; white-space: nowrap; overflow: hidden; }
.tabs .active { border-left-color: #eee; color: #333; }
.tabs svg { width: 14px; height: 14px; }
.tabs span { margin-top: auto; margin-bottom: 3px; }
.tabs .more { border: 0; height: 18px; writing-mode: horizontal-tb; font-size: 14px; justify-content: center; }

.status { height: 38px; padding: 2px 4px 0; border-bottom: 2px solid #777; background: linear-gradient(#fafafa, #eaeaea 30%); flex: none; }
.st1, .st2 { display: flex; align-items: center; height: 17px; }
.st2 { font-size: 9px; }
.coord { width: 96px; }
.play { border: 4px solid transparent; border-left: 5px solid #000; border-right: 0; }
.st2 .play { margin-left: 5px; }
.proof { margin-left: auto; margin-right: 23px; width: 13px; height: 11px; }
.ic { width: 15px; height: 15px; margin-right: 4px; }
.st2 .ic { margin-left: auto; }
.chip { width: 14px; height: 14px; margin-right: 137px; }
```
FILE: palette.js
```js
const colors = [
  "#000", "#181818", "#2c2c2c", "#444", "#555", "#606060", "#6c6c6c", "#666", "#5c5c5c", "#d4d4d4",
  "#fff", "#3300f0", "#00ffff", "#00ff22", "#ffff00", "#ff2200", "#ff00ff", "#550f77", "#ff7000", "#ff99cc",
  "#5c3338", "#ccc8ff", "#a294ff", "#6699ff", "#7766ff", "#4f4a70", "#2b3080", "#1f0066", "#3f5f85", "#22bbff",
  "#88ffff", "#667070", "#5c7575", "#33585c", "#003838", "#006644", "#118833", "#338060", "#227a44", "#227722",
  "#55ffcc", "#227755", "#6a6a6a", "#ccffcc", "#88ff99", "#557560", "#55802f", "#556b22", "#5a7030", "#88ff00",
  "#aaff44", "#333a00", "#5c5c33", "#6c7a6c", "#727f33"
];
const strip = document.getElementById("swatches");
for (const color of colors) {
  const swatch = document.createElement("button");
  swatch.style.background = color;
  swatch.setAttribute("aria-label", color);
  strip.append(swatch);
}
```
